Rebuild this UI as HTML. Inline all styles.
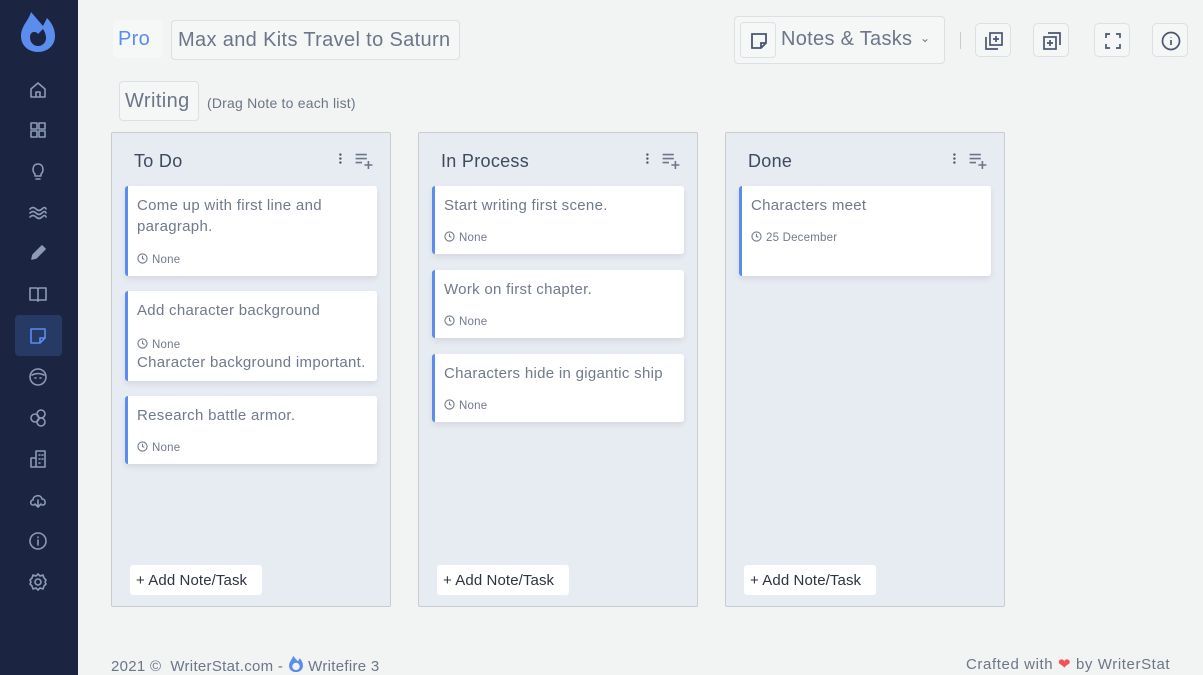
<!DOCTYPE html>
<html><head><meta charset="utf-8"><style>
*{box-sizing:border-box;margin:0;padding:0}
body{width:1203px;height:675px;overflow:hidden;background:#f2f3f3;font-family:"Liberation Sans",sans-serif;position:relative;color:#6b7689;letter-spacing:0.3px}
.sb{position:absolute;left:0;top:0;width:78px;height:675px;background:#1b2440}
.ic{position:absolute;left:27px;width:22px;height:22px}
.ic svg{width:22px;height:22px;fill:none;stroke:#8e9bb5;stroke-width:1.6;stroke-linecap:round;stroke-linejoin:round}
.act{position:absolute;left:15px;top:315px;width:47px;height:41px;background:#273a66;border-radius:4px}
.box{position:absolute;border:1px solid #dcdfe3;border-radius:4px;background:#f5f6f6;white-space:nowrap}
.col{position:absolute;top:132px;width:280px;height:475px;background:#e7ebf2;border:1px solid #c9ccd0;border-radius:2px}
.col h3{position:absolute;left:22px;top:18px;font-weight:normal;font-size:18px;color:#3e4a5f}
.card{position:absolute;left:13px;width:252px;background:#fff;border-left:3px solid #5b8def;border-radius:3px;box-shadow:0 3px 6px rgba(0,0,0,.08);padding:9px 9px;font-size:15px;line-height:21px;color:#6f7a8b}
.tm{font-size:11.5px;color:#6f7a8b;margin-top:15px;line-height:16px;letter-spacing:0.2px}
.tm svg{width:11px;height:11px;vertical-align:-1px;margin-right:4px}
.btn{position:absolute;left:18px;top:432px;width:132px;height:30px;background:#fff;border-radius:3px;font-size:15px;color:#2e3440;padding:7px 6px;letter-spacing:0.1px}
.tb{position:absolute;top:23px;width:36px;height:34px;border:1px solid #dcdfe3;border-radius:5px;background:#f5f6f6}
.tb svg{position:absolute;left:7px;top:6px;width:22px;height:22px;fill:none;stroke:#4a5670;stroke-width:1.7}
</style></head><body>
<div class="sb">
<svg style="position:absolute;left:19px;top:10px" width="38" height="44" viewBox="0 0 38 44"><path d="M12 2 C10 10 2 16 2 26 C2 36 10 42 19 42 C28 42 36 36 36 26 C36 18 32 12 28 8 L24 16 Z" fill="#5b8def"/><path d="M11 27 C11 22 16 20 19 24 L24 19 C26 22 27 25 27 28 C27 33 23 36 19 36 C15 36 11 33 11 27 Z" fill="#1b2440"/></svg>
<div class="act"></div>
<div class="ic" style="top:79px"><svg viewBox="0 0 22 22"><path d="M4 10 L11 4 L18 10 V18 H4 Z M9 18 V13 H13 V18"/></svg></div>
<div class="ic" style="top:119px"><svg viewBox="0 0 22 22"><rect x="4" y="4" width="6" height="6"/><rect x="12" y="4" width="6" height="6"/><rect x="4" y="12" width="6" height="6"/><rect x="12" y="12" width="6" height="6"/></svg></div>
<div class="ic" style="top:160px"><svg viewBox="0 0 22 22"><path d="M8 14 C5 12 5 4 11 4 C17 4 17 12 14 14 V16 H8 Z M9 19 H13"/></svg></div>
<div class="ic" style="top:201px"><svg viewBox="0 0 22 22"><path d="M3 8 Q6 5 9 8 T15 8 T19 8 M3 12 Q6 9 9 12 T15 12 T19 12 M3 16 Q6 13 9 16 T15 16 T19 16"/></svg></div>
<div class="ic" style="top:242px"><svg viewBox="0 0 22 22"><path d="M5 17 L6 13 L15 4 L18 7 L9 16 Z" fill="#8e9bb5"/></svg></div>
<div class="ic" style="top:283px"><svg viewBox="0 0 22 22"><path d="M3 5 H10 L11 6 L12 5 H19 V17 H12 L11 18 L10 17 H3 Z M11 6 V17"/></svg></div>
<div class="ic" style="top:325px"><svg viewBox="0 0 22 22" style="stroke:#5b8def"><path d="M4 4 H18 V13 L13 18 H4 Z M13 18 V13 H18"/></svg></div>
<div class="ic" style="top:366px"><svg viewBox="0 0 22 22"><circle cx="11" cy="11" r="8"/><path d="M5 9 Q11 6 17 9 M8 12 H9 M13 12 H14"/></svg></div>
<div class="ic" style="top:407px"><svg viewBox="0 0 22 22"><circle cx="8" cy="11" r="4"/><circle cx="14" cy="7" r="4"/><circle cx="14" cy="15" r="4"/></svg></div>
<div class="ic" style="top:448px"><svg viewBox="0 0 22 22"><path d="M4 19 V10 H9 V19 Z M9 19 V3 H18 V19 H4 M12 7 H13 M15 7 H16 M12 11 H13 M15 11 H16 M12 15 H13"/></svg></div>
<div class="ic" style="top:489px"><svg viewBox="0 0 22 22"><path d="M7 16 H6 C3 16 3 11 6 11 C6 6 14 5 15 10 C19 10 19 16 16 16 H15 M11 11 V18 M8 15 L11 18 L14 15"/></svg></div>
<div class="ic" style="top:530px"><svg viewBox="0 0 22 22"><circle cx="11" cy="11" r="8"/><path d="M11 10 V15 M11 7 V7.5"/></svg></div>
<div class="ic" style="top:571px"><svg viewBox="0 0 22 22"><circle cx="11" cy="11" r="3"/><path d="M11 3 L13 5 L16 4 L17 7 L19 9 L18 11 L19 13 L17 15 L16 18 L13 17 L11 19 L9 17 L6 18 L5 15 L3 13 L4 11 L3 9 L5 7 L6 4 L9 5 Z"/></svg></div>
</div>

<div class="box" style="left:113px;top:20px;width:50px;height:38px;border:none;background:#f6f7f7;color:#5b8def;font-size:20px;padding:8px 5px">Pro</div>
<div class="box" style="left:171px;top:20px;width:289px;height:40px;font-size:20px;padding:8px 6px;color:#6b7689;letter-spacing:0.35px">Max and Kits Travel to Saturn</div>
<div class="box" style="left:119px;top:81px;width:80px;height:40px;font-size:20px;padding:8px 5px;color:#6b7689;letter-spacing:0.4px">Writing</div>
<div style="position:absolute;left:207px;top:95px;font-size:14px;color:#6b7689;letter-spacing:0.2px">(Drag Note to each list)</div>

<div class="box" style="left:734px;top:16px;width:211px;height:48px"></div>
<div class="box" style="left:740px;top:22px;width:36px;height:36px;background:#f6f7f7"><svg style="position:absolute;left:8px;top:8px" width="20" height="20" viewBox="0 0 20 20" fill="none" stroke="#4a5670" stroke-width="1.8"><path d="M3 3 H17 V12 L12 17 H3 Z M12 17 V12 H17"/></svg></div>
<div style="position:absolute;left:781px;top:28px;font-size:20px;color:#6b7689;letter-spacing:0.3px">Notes &amp; Tasks</div>
<div style="position:absolute;left:920px;top:31px;font-size:12px;color:#6b7689">&#8964;</div>
<div style="position:absolute;left:960px;top:32px;width:1px;height:17px;background:#ccc"></div>
<div class="tb" style="left:975px"><svg viewBox="0 0 22 22"><rect x="7" y="3" width="12" height="12"/><path d="M3 7 V19 H15 M13 6 V12 M10 9 H16"/></svg></div>
<div class="tb" style="left:1033px"><svg viewBox="0 0 22 22"><rect x="3" y="7" width="12" height="12"/><path d="M7 3 H19 V15 M9 10 V16 M6 13 H12"/></svg></div>
<div class="tb" style="left:1094px"><svg viewBox="0 0 22 22"><path d="M4 8 V4 H8 M14 4 H18 V8 M18 14 V18 H14 M8 18 H4 V14"/></svg></div>
<div class="tb" style="left:1152px"><svg viewBox="0 0 22 22"><circle cx="11" cy="11" r="8.5"/><path d="M11 10 V15 M11 7 V7.5"/></svg></div>

<svg width="0" height="0" style="position:absolute"><defs>
<symbol id="clk" viewBox="0 0 12 12"><circle cx="6" cy="6" r="5" fill="none" stroke="#6f7a8b" stroke-width="1.2"/><path d="M6 3 V6 L8 7" fill="none" stroke="#6f7a8b" stroke-width="1.2"/></symbol>
<symbol id="hd" viewBox="0 0 60 20"><circle cx="3" cy="2" r="1.5" fill="#4a5670"/><circle cx="3" cy="7" r="1.5" fill="#4a5670"/><circle cx="3" cy="12" r="1.5" fill="#4a5670"/><path d="M22 2 H36 M22 7 H36 M22 12 H30 M33 15 H43 M38 10 V20" stroke="#6b7689" stroke-width="2"/></symbol>
</defs></svg>

<div class="col" style="left:111px"><h3>To Do</h3><svg style="position:absolute;left:226px;top:20px" width="48" height="16" viewBox="0 0 60 20"><use href="#hd"/></svg>
<div class="card" style="top:53px;height:90px">Come up with first line and paragraph.<div class="tm" style="margin-top:15px"><svg><use href="#clk"/></svg>None</div></div>
<div class="card" style="top:158px;height:90px">Add character background<div class="tm" style="margin-top:16px"><svg><use href="#clk"/></svg>None</div><div style="margin-top:-1px">Character background important.</div></div>
<div class="card" style="top:263px;height:68px">Research battle armor.<div class="tm" style="margin-top:14px"><svg><use href="#clk"/></svg>None</div></div>
<div class="btn">+ Add Note/Task</div></div>

<div class="col" style="left:418px"><h3>In Process</h3><svg style="position:absolute;left:226px;top:20px" width="48" height="16" viewBox="0 0 60 20"><use href="#hd"/></svg>
<div class="card" style="top:53px;height:68px">Start writing first scene.<div class="tm" style="margin-top:14px"><svg><use href="#clk"/></svg>None</div></div>
<div class="card" style="top:137px;height:68px">Work on first chapter.<div class="tm" style="margin-top:14px"><svg><use href="#clk"/></svg>None</div></div>
<div class="card" style="top:221px;height:68px">Characters hide in gigantic ship<div class="tm" style="margin-top:14px"><svg><use href="#clk"/></svg>None</div></div>
<div class="btn">+ Add Note/Task</div></div>

<div class="col" style="left:725px"><h3>Done</h3><svg style="position:absolute;left:226px;top:20px" width="48" height="16" viewBox="0 0 60 20"><use href="#hd"/></svg>
<div class="card" style="top:53px;height:90px">Characters meet<div class="tm" style="margin-top:14px"><svg><use href="#clk"/></svg>25 December</div></div>
<div class="btn">+ Add Note/Task</div></div>

<div style="position:absolute;left:111px;top:655px;font-size:15px;color:#6b7689;letter-spacing:0.3px;white-space:nowrap">2021 ©&nbsp; WriterStat.com - <svg width="16" height="18" viewBox="0 0 38 44" style="vertical-align:-2px"><path d="M12 2 C10 10 2 16 2 26 C2 36 10 42 19 42 C28 42 36 36 36 26 C36 18 32 12 28 8 L24 16 Z" fill="#5b8def"/><circle cx="19" cy="28" r="9" fill="#f2f3f3"/></svg> Writefire 3</div>
<div style="position:absolute;left:966px;top:655px;font-size:15px;color:#6b7689;letter-spacing:0.6px;white-space:nowrap">Crafted with <span style="color:#ee5555">&#10084;</span> by WriterStat</div>
</body></html>
